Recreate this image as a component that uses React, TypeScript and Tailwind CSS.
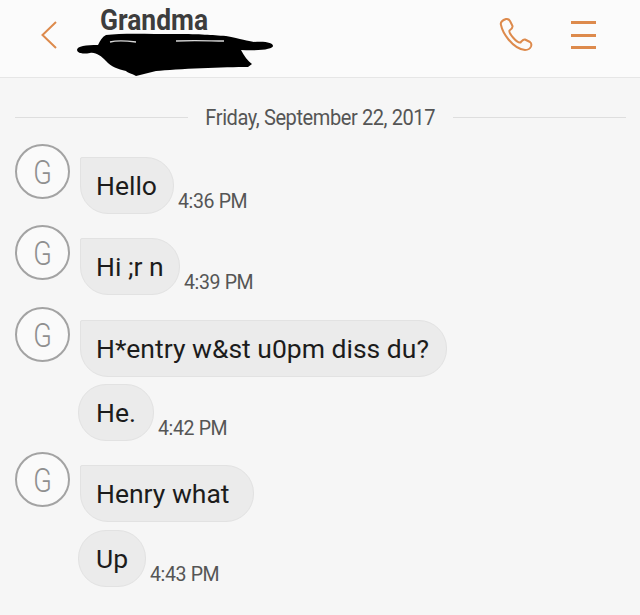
const ORANGE = '#dd8a4c';

function Avatar() {
  return (
    <div className="w-[55px] h-[55px] shrink-0 rounded-full border-2 border-[#a3a3a3] bg-[#fafafa] flex items-center justify-center text-[34px] leading-none text-[#8f8f8f] font-light">
      <span className="inline-block scale-x-[0.8]">G</span>
    </div>
  );
}

function Bubble({ text, time, first, width }: { text: string; time?: string; first?: boolean; width: string }) {
  return (
    <div className="flex items-end">
      <div
        className={`${width} h-[57px] bg-[#ebebeb] border border-[#e2e2e2] flex items-center text-[26.5px] leading-none whitespace-nowrap text-[#1c1c1c] ${
          first ? 'pl-[15px] rounded-[28px] rounded-tl-[2px]' : 'pl-[17px] rounded-[28px]'
        }`}
      >
        <span className="mt-[2px]">{text}</span>
      </div>
      {time && (
        <span className="inline-block origin-left scale-x-[0.93] ml-[4px] whitespace-nowrap text-[21px] leading-[26px] text-[#555555] tracking-[-0.4px]">
          {time}
        </span>
      )}
    </div>
  );
}

export default function App() {
  return (
    <div className="w-[640px] h-[615px] overflow-hidden bg-[#f6f6f6] font-['Roboto',sans-serif]">
      <header className="relative h-[78px] bg-[#fbfbfb] border-b border-[#e6e6e6] flex items-center">
        <svg width="18" height="30" viewBox="0 0 18 30" fill="none" className="ml-[40px] mt-[-8px]" stroke={ORANGE} strokeWidth="2">
          <path d="M16 2 L2.5 15 L16 28" />
        </svg>
        <div className="absolute left-[100px] top-[2px] origin-left scale-x-[0.88] text-[30px] leading-[36px] font-bold text-[#3d3d3d] whitespace-nowrap">Grandma</div>
        <svg width="200" height="46" viewBox="0 0 200 46" className="absolute left-[76px] top-[31px]" fill="#000000">
          <path d="M30 4 C45 2 70 3 100 3 C125 3 135 4 150 5 C165 8 172 10 178 11 C190 10 197 12 197 15 C197 18 185 20 165 19 C168 25 172 30 176 33 L172 36 C150 36 100 38 80 40 L60 45 C55 42 52 42 50 40 C42 38 35 36 30 30 C25 25 20 21 14 22 C8 23 2 23 1 19 C1 15 10 14 22 14 C24 10 26 6 30 4 Z" />
          <path d="M34 11 C42 9 52 10 60 11 M100 10 C120 9 135 10 148 10" fill="none" stroke="#d8d8d8" strokeWidth="1.3" />
        </svg>
        <svg width="36" height="36" viewBox="0 0 36 36" fill="none" className="absolute left-[498px] top-[17px]" stroke={ORANGE} strokeWidth="2" strokeLinejoin="round">
          <path d="M3 8 C2 5 5 3 8 2 C10 1.5 11 2.5 12 4 L14.5 9 C15 11 13 12.5 11.5 13.5 C11 14.5 12 17 15 20.5 C18 24 21 26 22.5 25.5 C24 24 25 22 27 22.5 L32 25 C33.5 26 33.5 28 33 29.5 C32 32 29.5 33 27 33 C21 32.5 15 28 10.5 22.5 C6.5 17.5 4 13 3 8 Z" />
        </svg>
        <div className="absolute left-[571px] top-[21px] w-[25px] h-[28px] flex flex-col justify-between">
          <div className="h-[3px] bg-[#dd8a4c]" />
          <div className="h-[3px] bg-[#dd8a4c]" />
          <div className="h-[3px] bg-[#dd8a4c]" />
        </div>
      </header>

      <div className="pt-[26px] pb-[14px] pl-[15px] pr-[14px] flex items-center h-[66px]">
        <div className="flex-1 h-px bg-[#dedede]" />
        <div className="w-[265px] shrink-0 flex justify-center">
          <span className="inline-block scale-x-[0.91] mt-[2px] whitespace-nowrap text-[22px] leading-[26px] text-[#555555] tracking-[-0.45px]">Friday, September 22, 2017</span>
        </div>
        <div className="flex-1 h-px bg-[#dedede]" />
      </div>

      <div className="pl-[15px]">
        <div className="flex gap-[10px] items-start">
          <Avatar />
          <div className="mt-[13px]"><Bubble first text="Hello" time="4:36 PM" width="w-[94px]" /></div>
        </div>
        <div className="flex gap-[10px] items-start mt-[11px]">
          <Avatar />
          <div className="mt-[13px]"><Bubble first text="Hi ;r n" time="4:39 PM" width="w-[100px]" /></div>
        </div>
        <div className="flex gap-[10px] items-start mt-[12px]">
          <Avatar />
          <div className="mt-[13px] flex flex-col gap-[7px]">
            <Bubble first text="H*entry w&st u0pm diss du?" width="w-[367px]" />
            <div className="-ml-[2px]"><Bubble text="He." time="4:42 PM" width="w-[76px]" /></div>
          </div>
        </div>
        <div className="flex gap-[10px] items-start mt-[11px]">
          <Avatar />
          <div className="mt-[13px] flex flex-col gap-[8px]">
            <Bubble first text="Henry what" width="w-[174px]" />
            <div className="-ml-[2px]"><Bubble text="Up" time="4:43 PM" width="w-[68px]" /></div>
          </div>
        </div>
      </div>
    </div>
  );
}
